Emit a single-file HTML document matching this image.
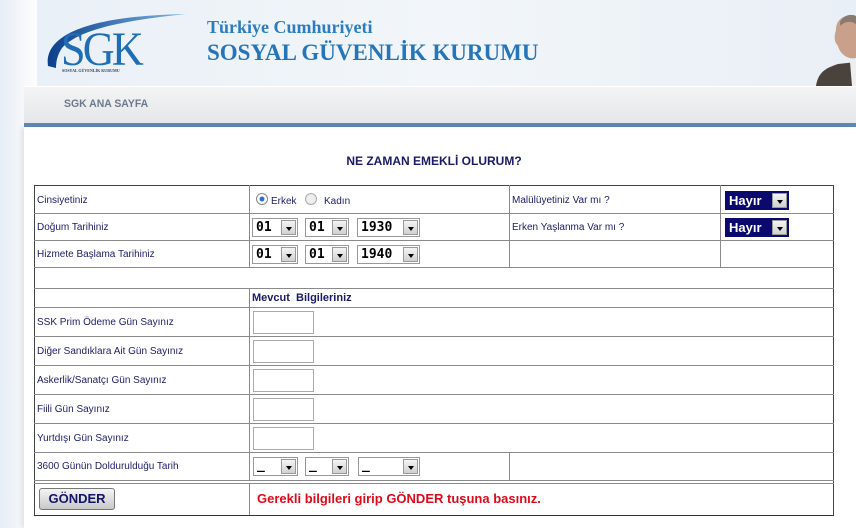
<!DOCTYPE html>
<html><head><meta charset="utf-8"><style>
*{margin:0;padding:0;box-sizing:border-box}
body{width:856px;height:528px;overflow:hidden;background:#fff;font-family:"Liberation Sans","DejaVu Sans",sans-serif;position:relative}
.a{position:absolute}
.l{position:absolute;background:#8a8a8a}
.t{position:absolute;font-size:10px;color:#1c1c6a;white-space:nowrap}
.sel{position:absolute;height:19px;border:1px solid #999;background:#fff}
.sel b{position:absolute;left:3px;top:1px;font:bold 13px "DejaVu Sans Mono","Liberation Mono",monospace;color:#000}
.arr{position:absolute;right:1px;top:1px;width:15px;height:15px;background:linear-gradient(#f4f4f4,#d0d0d0);border:1px solid #999}
.arr:after{content:"";position:absolute;left:4px;top:6px;border-left:3px solid transparent;border-right:3px solid transparent;border-top:4px solid #000}
.inp{position:absolute;left:253px;width:61px;height:23px;border:1px solid #aaa;background:#fff}
</style></head><body>
<div class="a" style="left:0;top:0;width:40px;height:528px;background:linear-gradient(90deg,#e6edf5,#f6f8fb 60%,#fff)"></div>
<div class="a" style="left:37px;top:0;width:819px;height:86px;background:linear-gradient(90deg,#eaf0f7,#f2f6fa 50%,#e9eff6)"></div>
<div class="a" style="left:24px;top:86px;width:832px;height:38px;background:linear-gradient(#f4f4f4,#e4e6e8);border-top:1px solid #fff"></div>
<div class="a" style="left:24px;top:123px;width:832px;height:4px;background:#5c88b4"></div>
<div class="a" style="left:24px;top:127px;width:832px;height:401px;background:#fff;box-shadow:-3px 0 4px rgba(0,0,0,0.08)"></div>
<div class="t" style="left:64px;top:98px;font-size:11px;font-weight:bold;color:#6a7a8c;transform:scaleX(0.95);transform-origin:left">SGK ANA SAYFA</div>
<svg class="a" style="left:40px;top:8px" width="150" height="70" viewBox="0 0 150 70">
<defs><linearGradient id="g" x1="0" x2="1"><stop offset="0" stop-color="#0b3f8a"/><stop offset="1" stop-color="#7fb6e6"/></linearGradient></defs>
<path d="M8 58 C4 30 40 8 146 6 C90 12 40 20 22 40 C18 46 16 52 16 60 Z" fill="url(#g)"/>
</svg>
<div class="a" style="left:61px;top:22px;font:48px 'Liberation Serif',serif;color:#1f6db5;letter-spacing:-3px;transform:scaleX(0.92);transform-origin:left">SGK</div>
<div class="a" style="left:62px;top:68px;font:bold 4px 'Liberation Serif',serif;color:#345;white-space:nowrap">SOSYAL GÜVENLİK KURUMU</div>
<div class="a" style="left:207px;top:17px;font:bold 18px 'Liberation Serif',serif;color:#2c7cbf;white-space:nowrap">Türkiye Cumhuriyeti</div>
<div class="a" style="left:207px;top:40px;font:bold 23px 'Liberation Serif',serif;color:#2575b8;white-space:nowrap">SOSYAL GÜVENLİK KURUMU</div>
<svg class="a" style="left:810px;top:10px" width="46" height="76">
<path d="M6 76 C8 62 16 58 28 54 L46 52 L46 76Z" fill="#4a423c"/>
<path d="M26 20 C26 8 36 4 46 6 L46 48 C38 50 30 44 28 36 C24 32 24 26 26 20Z" fill="#c9a08a"/>
<path d="M30 12 C34 4 42 4 46 6 L46 14 C40 10 34 12 30 16Z" fill="#8a7a70"/>
<path d="M40 52 L46 50 L46 76 L42 76Z" fill="#eee"/>
</svg>
<div class="t" style="left:0;width:868px;text-align:center;top:154px;font-weight:bold;font-size:12px;color:#1a1a66">NE ZAMAN EMEKLİ OLURUM?</div>
<div class="l" style="left:34px;top:185px;width:800px;height:1px;background:#444"></div>
<div class="l" style="left:34px;top:185px;width:1px;height:331px;background:#444"></div>
<div class="l" style="left:833px;top:185px;width:1px;height:331px;background:#444"></div>
<div class="l" style="left:34px;top:515px;width:800px;height:1px;background:#333"></div>
<div class="l" style="left:34px;top:213px;width:800px;height:1px"></div>
<div class="l" style="left:34px;top:240px;width:800px;height:1px"></div>
<div class="l" style="left:34px;top:267px;width:800px;height:1px"></div>
<div class="l" style="left:34px;top:288px;width:800px;height:1px"></div>
<div class="l" style="left:34px;top:307px;width:800px;height:1px"></div>
<div class="l" style="left:34px;top:336px;width:800px;height:1px"></div>
<div class="l" style="left:34px;top:365px;width:800px;height:1px"></div>
<div class="l" style="left:34px;top:394px;width:800px;height:1px"></div>
<div class="l" style="left:34px;top:423px;width:800px;height:1px"></div>
<div class="l" style="left:34px;top:452px;width:800px;height:1px"></div>
<div class="l" style="left:34px;top:480px;width:800px;height:1px"></div>
<div class="l" style="left:34px;top:483px;width:800px;height:1px"></div>
<div class="l" style="left:249px;top:185px;width:1px;height:82px"></div>
<div class="l" style="left:509px;top:185px;width:1px;height:82px"></div>
<div class="l" style="left:720px;top:185px;width:1px;height:82px"></div>
<div class="l" style="left:249px;top:288px;width:1px;height:192px"></div>
<div class="l" style="left:509px;top:452px;width:1px;height:28px"></div>
<div class="l" style="left:249px;top:483px;width:1px;height:32px"></div>
<div class="t" style="left:37px;top:195px">Cinsiyetiniz</div>
<div class="t" style="left:37px;top:222px">Doğum Tarihiniz</div>
<div class="t" style="left:37px;top:249px">Hizmete Başlama Tarihiniz</div>
<div class="t" style="left:512px;top:195px">Malülüyetiniz Var mı ?</div>
<div class="t" style="left:512px;top:222px">Erken Yaşlanma Var mı ?</div>
<div class="t" style="left:252px;top:292px;font-weight:bold;font-size:11px;color:#1a1a66">Mevcut&nbsp; Bilgileriniz</div>
<div class="t" style="left:37px;top:317px">SSK Prim Ödeme Gün Sayınız</div>
<div class="t" style="left:37px;top:346px">Diğer Sandıklara Ait Gün Sayınız</div>
<div class="t" style="left:37px;top:375px">Askerlik/Sanatçı Gün Sayınız</div>
<div class="t" style="left:37px;top:404px">Fiili Gün Sayınız</div>
<div class="t" style="left:37px;top:433px">Yurtdışı Gün Sayınız</div>
<div class="t" style="left:37px;top:461px">3600 Günün Doldurulduğu Tarih</div>
<div class="a" style="left:256px;top:193px;width:12px;height:12px;border-radius:50%;border:1px solid #888;background:radial-gradient(#2a6ed0 30%,#fff 40%)"></div>
<div class="t" style="left:271px;top:196px">Erkek</div>
<div class="a" style="left:305px;top:193px;width:12px;height:12px;border-radius:50%;border:1px solid #aaa;background:#eee"></div>
<div class="t" style="left:324px;top:196px">Kadın</div>
<div class="sel" style="left:252px;top:218px;width:46px"><b>01</b><span class="arr"></span></div>
<div class="sel" style="left:305px;top:218px;width:44px"><b>01</b><span class="arr"></span></div>
<div class="sel" style="left:357px;top:218px;width:63px"><b>1930</b><span class="arr"></span></div>
<div class="sel" style="left:252px;top:245px;width:46px"><b>01</b><span class="arr"></span></div>
<div class="sel" style="left:305px;top:245px;width:44px"><b>01</b><span class="arr"></span></div>
<div class="sel" style="left:357px;top:245px;width:63px"><b>1940</b><span class="arr"></span></div>
<div class="sel" style="left:725px;top:191px;width:64px;background:#0a0a6e;border-color:#0a0a6e"><b style="font:bold 13px 'Liberation Sans',sans-serif;color:#fff;left:3px;top:1px">Hayır</b><span class="arr"></span></div>
<div class="sel" style="left:725px;top:218px;width:64px;background:#0a0a6e;border-color:#0a0a6e"><b style="font:bold 13px 'Liberation Sans',sans-serif;color:#fff;left:3px;top:1px">Hayır</b><span class="arr"></span></div>
<div class="sel" style="left:253px;top:457px;width:45px"><b style="top:0">_</b><span class="arr"></span></div>
<div class="sel" style="left:305px;top:457px;width:44px"><b style="top:0">_</b><span class="arr"></span></div>
<div class="sel" style="left:358px;top:457px;width:62px"><b style="top:0">_</b><span class="arr"></span></div>
<div class="inp" style="top:311px"></div>
<div class="inp" style="top:340px"></div>
<div class="inp" style="top:369px"></div>
<div class="inp" style="top:398px"></div>
<div class="inp" style="top:427px"></div>
<div class="a" style="left:39px;top:488px;width:76px;height:22px;border:1px solid #777;border-radius:3px;background:linear-gradient(#f4f4f4,#c8c8c8);font:bold 13px 'Liberation Sans',sans-serif;color:#14146a;text-align:center;line-height:20px">GÖNDER</div>
<div class="t" style="left:257px;top:491px;font-weight:bold;font-size:13px;color:#dd0a1a">Gerekli bilgileri girip GÖNDER tuşuna basınız.</div>
</body></html>
